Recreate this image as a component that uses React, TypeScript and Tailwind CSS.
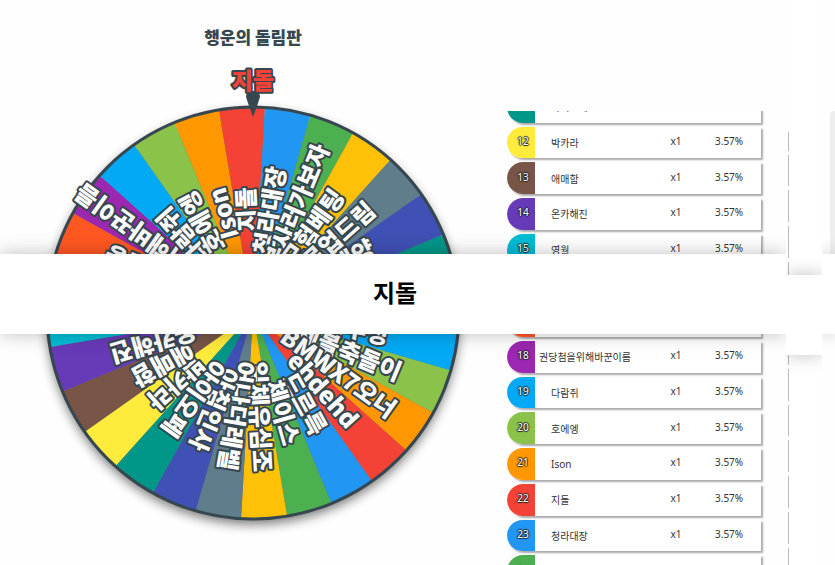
import React from "react";

type Entry = { id: number; name: string; color: string };

const PALETTE = [
  "#9c27b0", "#03a9f4", "#8bc34a", "#ff9800", "#f44336", "#2196f3",
  "#4caf50", "#ffc107", "#607d8b", "#3f51b5", "#009688", "#ffeb3b",
  "#795548", "#673ab7", "#00bcd4", "#e91e63", "#ff5722",
];

const NAMES = [
  "행운이", "최우정", "제볼축돌이", "BMWX7오너", "ehdehd", "드르륵", "체이스",
  "일체유심조", "어나더레벨", "아침인사", "아이오페", "박카라", "애매함",
  "온카해진", "영월", "도라지", "하루한번중", "권당첨을위해바꾼이름", "다람쥐",
  "호에엥", "Ison", "지돌", "청라대장", "돈복사러가보자", "모험베팅",
  "무료업드림", "김태양", "산들",
];

const ENTRIES: Entry[] = NAMES.map((name, i) => ({
  id: i + 1,
  name,
  color: PALETTE[i % PALETTE.length],
}));

const WINNER = ENTRIES[21];
const RADIUS = 206;
const STEP = 360 / ENTRIES.length;
const OFFSET = -3.1;

function point(angle: number) {
  const rad = (angle * Math.PI) / 180;
  return `${(RADIUS * Math.sin(rad)).toFixed(2)} ${(-RADIUS * Math.cos(rad)).toFixed(2)}`;
}

function Wheel() {
  const slices = ENTRIES.map((e) => ({
    ...e,
    angle: (e.id - WINNER.id) * STEP + OFFSET,
  }));
  return (
    <svg
      viewBox="-240 -240 480 480"
      className="w-[480px] max-w-full shrink-0 overflow-visible font-['Noto_Sans_CJK_KR',sans-serif] font-black"
      role="img"
      aria-label="행운의 돌림판"
    >
      <defs>
        <filter id="wheel-shadow" x="-10%" y="-10%" width="120%" height="120%">
          <feGaussianBlur stdDeviation="6" />
        </filter>
      </defs>
      <circle cy="5" r={RADIUS} fill="#000" opacity="0.55" filter="url(#wheel-shadow)" />
      {slices.map((s) => (
        <path
          key={s.id}
          d={`M0 0L${point(s.angle - STEP / 2)}A${RADIUS} ${RADIUS} 0 0 1 ${point(s.angle + STEP / 2)}Z`}
          fill={s.color}
        />
      ))}
      <circle r={RADIUS} fill="none" stroke="#37474f" strokeWidth="3" />
      {slices.map((s) => (
        <text
          key={s.id}
          transform={`rotate(${s.angle - 90})`}
          x="104"
          y="8"
          textAnchor="middle"
          fontSize="24"
          fill="#fff"
          stroke="#37474f"
          strokeWidth="4"
          strokeLinejoin="round"
          paintOrder="stroke"
        >
          {s.name}
        </text>
      ))}
      <path d="M-6 -222H6L7 -216L4 -207L0 -196L-4 -207L-7 -216Z" fill="#37474f" />
      <text
        x="0"
        y="-224"
        textAnchor="middle"
        fontSize="23"
        fill="#f44336"
        stroke="#37474f"
        strokeWidth="4"
        strokeLinejoin="round"
        paintOrder="stroke"
      >
        {WINNER.name}
      </text>
    </svg>
  );
}

function EntryRow({ entry }: { entry: Entry }) {
  return (
    <tr className="grid grid-cols-[28px_1fr_78px_46px] items-stretch rounded-l-2xl bg-white shadow-[2px_2px_2px_#aaa]">
      <td
        className="flex items-center justify-center rounded-l-2xl pb-0.5 pl-1 text-white [text-shadow:1px_0_1px_#222,-1px_0_1px_#222,0_1px_1px_#222,0_-1px_1px_#222]"
        style={{ backgroundColor: entry.color }}
      >
        {entry.id}
      </td>
      <td className={`flex items-center pt-0.5 whitespace-nowrap ${entry.name.length > 8 ? "pl-1" : "pl-4"}`}>
        {entry.name}
      </td>
      <td className="flex items-center justify-center pb-0.5">x1</td>
      <td className="flex items-center pb-0.5">3.57%</td>
    </tr>
  );
}

function EntryList() {
  return (
    <div className="mt-[111px] min-h-0 w-[280px] shrink-0 overflow-hidden pl-px">
      <table className="-mt-5 flex h-[496px] w-[254px] text-[10px] text-[#333]">
        <tbody className="grid h-full w-full auto-rows-fr gap-y-1">
          {ENTRIES.slice(10, 24).map((e) => (
            <EntryRow key={e.id} entry={e} />
          ))}
        </tbody>
      </table>
    </div>
  );
}

function SideStrip() {
  return (
    <div className="relative h-full w-9 overflow-hidden bg-white">
      <div className="mt-[132px] h-full overflow-hidden">
        <div className="-mt-[15px] grid h-[496px] w-px auto-rows-fr gap-y-1">
          {ENTRIES.slice(0, 14).map((e) => (
            <div key={e.id} className="bg-white shadow-[2px_2px_0_#bbb]" />
          ))}
        </div>
      </div>
      <div className="absolute inset-x-0 top-[275px] h-20 bg-white shadow-[0_0_18px_rgba(0,0,0,0.25)]" />
    </div>
  );
}

export default function App() {
  return (
    <div className="flex h-screen overflow-hidden bg-[#fefefe] font-['Noto_Sans','Noto_Sans_CJK_KR',sans-serif]">
      <main className="relative flex min-w-0 flex-1 overflow-hidden">
        <section className="flex min-w-0 flex-1 flex-col items-center">
          <h1 className="flex h-[73px] shrink-0 items-center font-['Noto_Sans_CJK_KR',sans-serif] text-[17px] font-black text-[#37474f]">
            행운의 돌림판
          </h1>
          <Wheel />
        </section>
        <EntryList />
        <div
          role="status"
          className="absolute inset-x-0 top-[254px] flex h-20 items-center justify-center bg-white pb-1 pl-1 font-['Noto_Sans_CJK_KR',sans-serif] text-2xl font-bold text-black shadow-[0_0_18px_rgba(0,0,0,0.25)]"
        >
          {WINNER.name}
        </div>
      </main>
      <SideStrip />
      <aside className="relative w-[13px] overflow-hidden">
        <div className="mt-[111px] ml-2 h-[143px] rounded-tl bg-[#eee]" />
        <div className="absolute inset-x-0 top-[254px] h-20 bg-white shadow-[0_0_18px_rgba(0,0,0,0.25)]" />
      </aside>
    </div>
  );
}
